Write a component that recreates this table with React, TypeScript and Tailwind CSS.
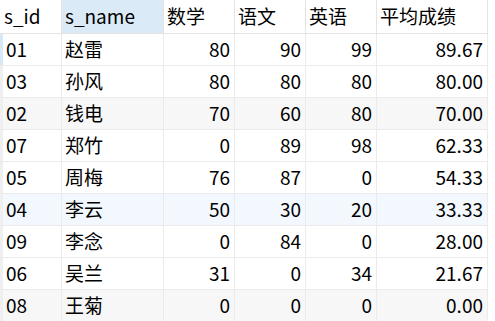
const rows = [
  ['01', '赵雷', '80', '90', '99', '89.67'],
  ['03', '孙风', '80', '80', '80', '80.00'],
  ['02', '钱电', '70', '60', '80', '70.00'],
  ['07', '郑竹', '0', '89', '98', '62.33'],
  ['05', '周梅', '76', '87', '0', '54.33'],
  ['04', '李云', '50', '30', '20', '33.33'],
  ['09', '李念', '0', '84', '0', '28.00'],
  ['06', '吴兰', '31', '0', '34', '21.67'],
  ['08', '王菊', '0', '0', '0', '0.00'],
];

const headers = ['s_id', 's_name', '数学', '语文', '英语', '平均成绩'];
const widths = ['w-[62px]', 'w-[102px]', 'w-[71px]', 'w-[71px]', 'w-[71px]', 'w-[111px]'];

export default function App() {
  return (
    <div
      className="w-[495px] h-[321px] overflow-hidden bg-white text-[19px] text-black"
      style={{ fontFamily: '"Noto Sans CJK SC", "Noto Sans", sans-serif' }}
    >
      <div className="flex h-[34px] border-b border-[#e3e3e3] w-[488px]">
        {headers.map((h, i) => (
          <div
            key={h}
            className={`${widths[i]} shrink-0 h-full border-r border-[#e3e3e3] flex items-center ${
              i === 0 ? 'pl-[4px]' : 'pl-[3px]'
            } ${i === 1 ? 'bg-[#dbeaf7]' : 'bg-white'}`}
          >
            {h}
          </div>
        ))}
      </div>
      {rows.map((r, ri) => {
        const bg = ri === 5 ? 'bg-[#f2f8fd]' : ri % 3 === 2 ? 'bg-[#f7f7f7]' : 'bg-white';
        return (
          <div key={r[0]} className={`flex h-[32px] border-b border-[#ebebeb] w-[488px] ${bg}`}>
            {r.map((c, i) => (
              <div
                key={i}
                className={`${widths[i]} shrink-0 h-full border-r border-[#ebebeb] flex items-center ${
                  i >= 2 ? 'justify-end pr-[4px]' : 'pl-[3px]'
                } ${i === 0 ? (ri === 0 ? 'border-l-[3px] border-l-[#d7e8f7] pl-[1px]' : 'border-l-[3px] border-l-[#efefef] pl-[1px]') : ''}`}
              >
                {c}
              </div>
            ))}
          </div>
        );
      })}
    </div>
  );
}
